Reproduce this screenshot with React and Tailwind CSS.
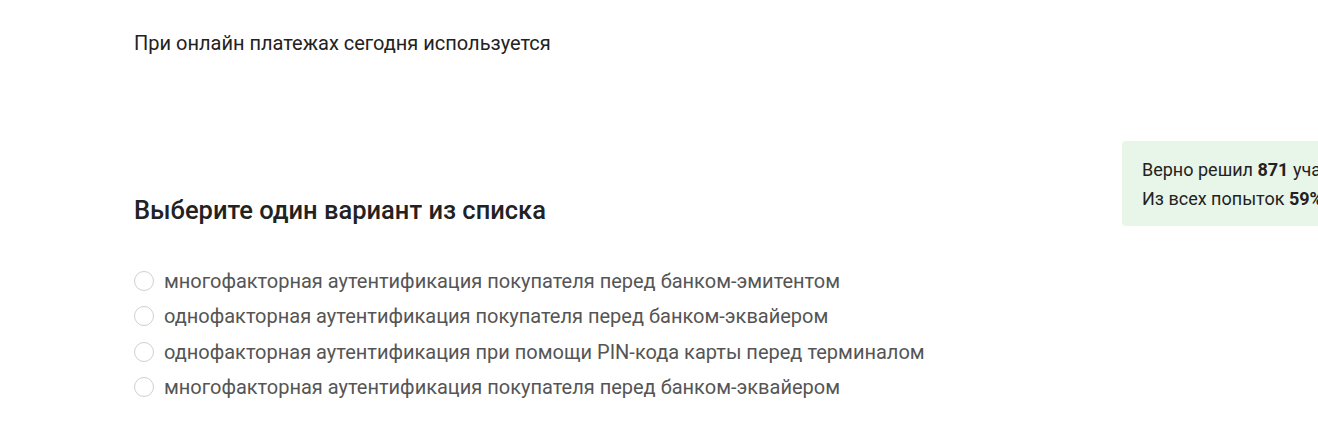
import React from 'react';

const options = [
  'многофакторная аутентификация покупателя перед банком-эмитентом',
  'однофакторная аутентификация покупателя перед банком-эквайером',
  'однофакторная аутентификация при помощи PIN-кода карты перед терминалом',
  'многофакторная аутентификация покупателя перед банком-эквайером',
];

const App = () => {
  return (
    <div className="w-[1318px] h-[422px] overflow-hidden bg-white font-['Roboto',sans-serif] flex pl-[134px]">
      {/* Question column */}
      <div className="w-[988px] shrink-0 pt-[29px]">
        <p className="text-[20px] leading-[28px] text-[#222]">При онлайн платежах сегодня используется</p>

        <h2 className="mt-[137px] text-[25.5px] leading-[32px] font-medium text-[#222]">
          Выберите один вариант из списка
        </h2>

        <div className="mt-[37px]">
          {options.map((opt, i) => (
            <label key={i} className="flex items-center h-[35.5px] cursor-pointer">
              <span className="w-[20px] h-[20px] rounded-full border border-[#cfcfcf] bg-white shrink-0" />
              <span className="ml-[10px] text-[20px] leading-[28px] text-[#555]">{opt}</span>
            </label>
          ))}
        </div>
      </div>

      {/* Stats */}
      <div className="shrink-0 pt-[141px]">
        <div className="w-[340px] rounded bg-[#e8f5e9] px-5 py-[13.5px] text-[18px] leading-[29px] text-[#222] whitespace-nowrap">
          <p>Верно решил <b className="font-bold">871</b> участник</p>
          <p>Из всех попыток <b className="font-bold">59%</b> правильных</p>
        </div>
      </div>
    </div>
  );
};

export default App;
